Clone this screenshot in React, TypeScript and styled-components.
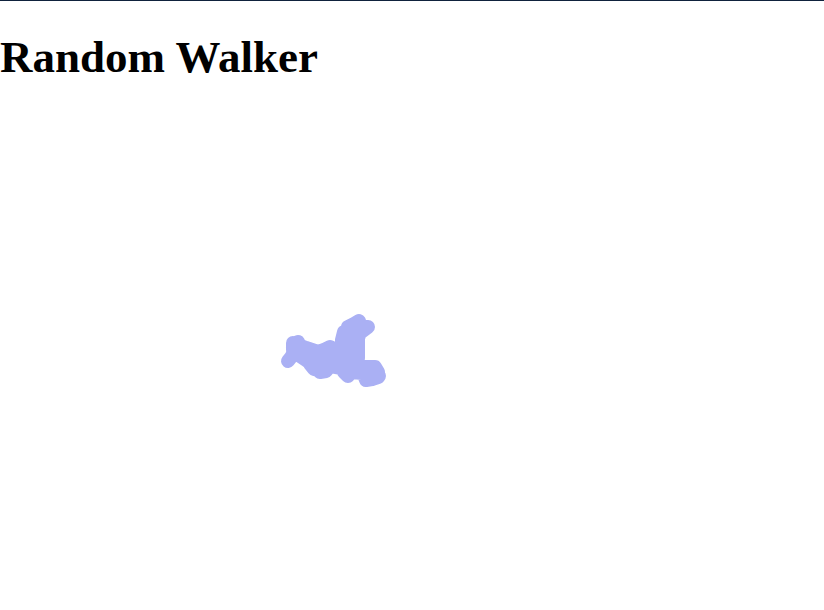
import React from "react";
import styled, { createGlobalStyle } from "styled-components";

const Global = createGlobalStyle`
  html, body { margin: 0; padding: 0; background: #ffffff; }
  body { font-family: "Liberation Serif", "Times New Roman", serif; overflow: hidden; }
`;

const Page = styled.div`
  border-top: 1px solid #0f223d;
  display: flex;
  flex-direction: column;
`;

const Title = styled.h1`
  margin: 30px 0 0;
  font-family: "Liberation Serif", "Times New Roman", serif;
  font-weight: bold;
  font-size: 45px;
  line-height: 52px;
  color: #000;
`;

const Stage = styled.svg`
  display: block;
  width: 824px;
  height: 527px;
`;

const walk: [number, number][] = [
  [288, 361], [292, 356], [294, 350], [294, 344], [298, 342], [298, 348],
  [304, 350], [310, 352], [310, 357], [316, 357], [316, 363], [318, 368],
  [322, 366], [322, 360], [328, 355], [328, 350], [334, 352], [334, 357],
  [338, 362], [344, 366], [344, 372], [348, 376], [350, 368], [348, 362],
  [348, 356], [348, 350], [348, 344], [348, 338], [348, 332], [348, 327],
  [354, 324], [359, 321], [360, 327], [368, 327], [360, 333], [358, 338],
  [358, 346], [358, 352], [358, 358], [350, 362], [362, 367], [368, 367],
  [375, 367], [378, 372], [378, 377], [372, 379], [366, 380], [364, 375],
  [370, 372], [379, 376], [362, 373], [352, 372], [340, 368], [330, 366],
  [326, 371], [320, 372], [314, 366], [306, 360], [300, 356],
  [293, 347], [295, 343], [300, 345], [300, 350], [293, 350], [293, 343],
  [306, 348], [312, 350], [318, 352], [324, 350], [330, 347], [336, 350],
  [340, 356], [336, 364], [328, 364], [322, 370], [314, 369], [310, 364],
  [320, 358], [330, 360], [342, 350], [342, 340], [344, 332], [352, 330],
];

const d = walk.map(([x, y], i) => `${i ? "L" : "M"}${x} ${y}`).join(" ");

export default function App() {
  return (
    <Page>
      <Global />
      <Title>Random Walker</Title>
      <Stage viewBox="0 83 824 527">
        <path d={d} fill="none" stroke="#aab0f4" strokeWidth={14} strokeLinecap="round" strokeLinejoin="round" />
      </Stage>
    </Page>
  );
}
